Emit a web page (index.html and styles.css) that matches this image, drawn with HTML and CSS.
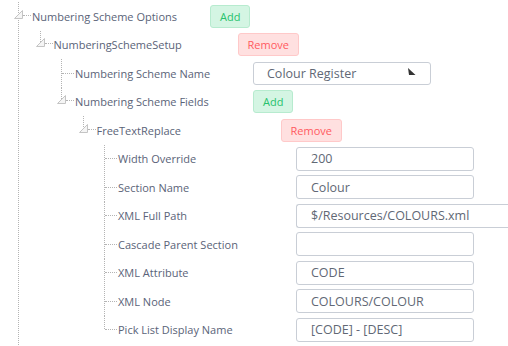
FILE: index.html
```html
<!DOCTYPE html>
<html lang="en">

<head>
    <meta charset="UTF-8">
    <title>Numbering Scheme Options</title>
    <link rel="stylesheet" href="styles.css">
</head>

<body>
    <ul class="tree">
        <li class="through">
            <div class="row">
                <span class="twist"><svg width="9" height="9" viewBox="0 0 9 9"><polygon points="0.5,8.5 8.5,8.5 8.5,0.5" /></svg></span>
                <span class="dash"></span>
                <span class="label">Numbering Scheme Options</span>
                <button class="btn add">Add</button>
            </div>
            <ul>
                <li>
                    <div class="row">
                        <span class="twist"><svg width="9" height="9" viewBox="0 0 9 9"><polygon points="0.5,8.5 8.5,8.5 8.5,0.5" /></svg></span>
                        <span class="dash"></span>
                        <span class="label">NumberingSchemeSetup</span>
                        <button class="btn remove">Remove</button>
                    </div>
                    <ul>
                        <li>
                            <div class="row">
                                <span class="elbow"></span>
                                <span class="label">Numbering Scheme Name</span>
                                <div class="select">
                                    <span>Colour Register</span>
                                    <svg width="8" height="7" viewBox="0 0 8 7"><polygon points="0,0 1,7 7.5,7" /></svg>
                                </div>
                            </div>
                        </li>
                        <li>
                            <div class="row">
                                <span class="twist"><svg width="9" height="9" viewBox="0 0 9 9"><polygon points="0.5,8.5 8.5,8.5 8.5,0.5" /></svg></span>
                                <span class="dash"></span>
                                <span class="label">Numbering Scheme Fields</span>
                                <button class="btn add">Add</button>
                            </div>
                            <ul>
                                <li>
                                    <div class="row">
                                        <span class="twist"><svg width="9" height="9" viewBox="0 0 9 9"><polygon points="0.5,8.5 8.5,8.5 8.5,0.5" /></svg></span>
                                        <span class="dash"></span>
                                        <span class="label">FreeTextReplace</span>
                                        <button class="btn remove">Remove</button>
                                    </div>
                                    <ul>
                                        <li>
                                            <div class="row">
                                                <span class="elbow"></span>
                                                <span class="label">Width Override</span>
                                                <input type="text" class="field" value="200" />
                                            </div>
                                        </li>
                                        <li>
                                            <div class="row">
                                                <span class="elbow"></span>
                                                <span class="label">Section Name</span>
                                                <input type="text" class="field" value="Colour" />
                                            </div>
                                        </li>
                                        <li>
                                            <div class="row">
                                                <span class="elbow"></span>
                                                <span class="label">XML Full Path</span>
                                                <input type="text" class="field wide" value="$/Resources/COLOURS.xml" />
                                            </div>
                                        </li>
                                        <li>
                                            <div class="row">
                                                <span class="elbow"></span>
                                                <span class="label">Cascade Parent Section</span>
                                                <input type="text" class="field" value="" />
                                            </div>
                                        </li>
                                        <li>
                                            <div class="row">
                                                <span class="elbow"></span>
                                                <span class="label">XML Attribute</span>
                                                <input type="text" class="field" value="CODE" />
                                            </div>
                                        </li>
                                        <li>
                                            <div class="row">
                                                <span class="elbow"></span>
                                                <span class="label">XML Node</span>
                                                <input type="text" class="field" value="COLOURS/COLOUR" />
                                            </div>
                                        </li>
                                        <li>
                                            <div class="row">
                                                <span class="elbow"></span>
                                                <span class="label">Pick List Display Name</span>
                                                <input type="text" class="field" value="[CODE] - [DESC]" />
                                            </div>
                                        </li>
                                    </ul>
                                </li>
                            </ul>
                        </li>
                    </ul>
                </li>
            </ul>
        </li>
    </ul>
</body>

</html>
```

FILE: styles.css
```css
body {
    margin: 0px;
    padding: 2px 0px 0px 0px;
    background-color: #ffffff;
    font-family: "Open Sans", "Noto Sans", sans-serif;
    font-size: 11px;
    color: #5a6378;
    overflow: hidden;
}

ul {
    list-style: none;
    margin: 0px 0px 0px 20.5px;
    padding: 0px;
}

.tree {
    margin: 0px;
    padding-left: 18px;
}

/* dotted rail on the left of every item, cut at the row middle for the last one */
li {
    padding-left: 1px;
    background: repeating-linear-gradient(to bottom, #b4b4b4 0px, #b4b4b4 1px, transparent 1px, transparent 2px) no-repeat left top;
    background-size: 1px 100%;
}

li:last-child {
    background-size: 1px 14px;
}

li.through {
    background-size: 1px 100%;
    padding-bottom: 4px;
}

.row {
    display: flex;
    align-items: center;
    height: 28.5px;
}

.elbow {
    flex: none;
    width: 12px;
    border-top: 1px dotted #b4b4b4;
}

.twist {
    flex: none;
    display: flex;
    margin-left: -5px;
    margin-bottom: 4px;
}

.twist polygon {
    fill: #f5f5f5;
    stroke: #c4c4c4;
    stroke-width: 1;
}

.dash {
    flex: none;
    width: 8px;
    border-top: 1px dotted #b4b4b4;
    margin-bottom: 2px;
}

.label {
    flex: 0 0 179px;
    padding-left: 1px;
    box-sizing: border-box;
    white-space: nowrap;
}

.btn {
    flex: none;
    height: 23px;
    padding: 0px 9px;
    border-radius: 3px;
    font-family: "Open Sans", "Noto Sans", sans-serif;
    font-size: 11px;
    cursor: pointer;
}

.add {
    background-color: #d4f5e3;
    border: 1px solid #b7ebcf;
    color: #27c26c;
}

.remove {
    margin-left: 6px;
    background-color: #ffe0e0;
    border: 1px solid #ffc9c9;
    color: #ff5a5f;
}

.select {
    flex: none;
    display: flex;
    justify-content: space-between;
    width: 178px;
    height: 23px;
    box-sizing: border-box;
    padding: 0px 14px 0px 13px;
    border: 1px solid #c9ced6;
    border-radius: 3px;
    font-size: 12.5px;
    line-height: 21px;
    color: #616875;
}

.select svg {
    margin-top: 5px;
}

.select polygon {
    fill: #333333;
}

.field {
    flex: none;
    width: 178px;
    height: 24px;
    box-sizing: border-box;
    padding: 0px 0px 0px 14px;
    border: 1px solid #c9ced6;
    border-radius: 3px;
    font-family: "Open Sans", "Noto Sans", sans-serif;
    font-size: 12.5px;
    color: #616875;
}

.field:focus {
    outline: none;
}

/* runs on past the window edge in the original */
.wide {
    width: 212px;
    border-right: none;
    border-radius: 3px 0px 0px 3px;
}
```
